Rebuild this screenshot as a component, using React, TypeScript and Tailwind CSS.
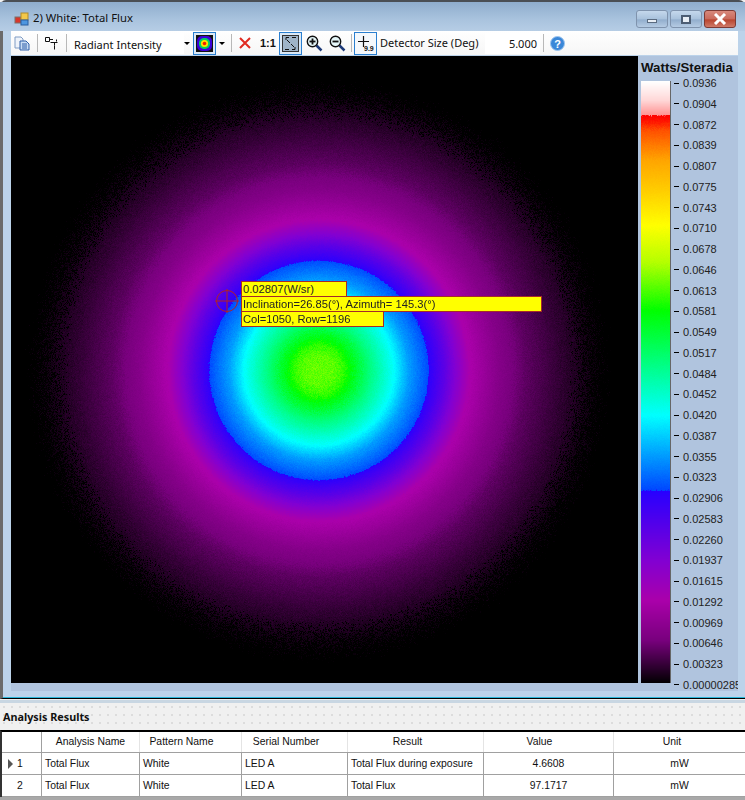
import { useEffect, useRef } from 'react'

const LEVELS = [
  '0.0936', '0.0904', '0.0872', '0.0839', '0.0807', '0.0775', '0.0743', '0.0710', '0.0678', '0.0646',
  '0.0613', '0.0581', '0.0549', '0.0517', '0.0484', '0.0452', '0.0420', '0.0387', '0.0355', '0.0323',
  '0.02906', '0.02583', '0.02260', '0.01937', '0.01615', '0.01292', '0.00969', '0.00646', '0.00323', '0.00000285',
]

// colour of the scale, keyed by the y of the scale on the page
const SCALE: number[][] = [
  [81, 255, 255, 255], [100, 255, 215, 215], [114, 255, 150, 150], [115, 255, 0, 0], [121, 255, 20, 0],
  [130, 255, 80, 0], [160, 255, 165, 0], [190, 255, 205, 0], [225, 255, 255, 0], [262, 180, 255, 0],
  [310, 0, 255, 0], [415, 0, 255, 255], [490, 0, 70, 255], [491, 40, 0, 255], [560, 130, 0, 210],
  [600, 170, 0, 170], [640, 120, 0, 125], [683, 0, 0, 0],
]

// radius in the plot -> y on the scale
const PROFILE: number[][] = [
  [0, 283], [15, 286], [25, 298], [32, 315], [40, 335], [52, 365], [75, 415], [90, 455], [109, 487], [111, 497],
  [125, 530], [150, 598], [180, 630], [207, 650], [240, 665], [270, 677], [295, 684], [900, 700],
]

function lerpTable(table: number[][], x: number, col: number) {
  if (x <= table[0][0]) return table[0][col]
  for (let i = 1; i < table.length; i++) {
    if (x <= table[i][0]) {
      const a = table[i - 1]
      const b = table[i]
      return a[col] + ((b[col] - a[col]) * (x - a[0])) / (b[0] - a[0])
    }
  }
  return table[table.length - 1][col]
}

function makeRandom(seed: number) {
  let s = seed
  return () => {
    s = (s * 1664525 + 1013904223) >>> 0
    return s / 4294967296
  }
}

function HeatMap() {
  const ref = useRef<HTMLCanvasElement>(null)
  useEffect(() => {
    const ctx = ref.current?.getContext('2d')
    if (!ctx) return
    const rnd = makeRandom(7)
    const img = ctx.createImageData(627, 627)
    for (let y = 0; y < 627; y++) {
      for (let x = 0; x < 627; x++) {
        const r = Math.hypot(x - 307.5, y - 314)
        const g = rnd() + rnd() + rnd() - 1.5
        const sigma = r < 45 ? 9 : r < 111 ? 4 : r < 240 ? 3 : 4
        const sy = lerpTable(PROFILE, r, 1) + g * sigma
        const black = r > 250 && rnd() < (r - 250) / 45
        const i = (y * 627 + x) * 4
        img.data[i] = black ? 0 : lerpTable(SCALE, sy, 1)
        img.data[i + 1] = black ? 0 : lerpTable(SCALE, sy, 2)
        img.data[i + 2] = black ? 0 : lerpTable(SCALE, sy, 3)
        img.data[i + 3] = 255
      }
    }
    ctx.putImageData(img, 0, 0)
  }, [])
  return <canvas ref={ref} width={627} height={627} className="block" />
}

function ScaleBar() {
  const ref = useRef<HTMLCanvasElement>(null)
  useEffect(() => {
    const ctx = ref.current?.getContext('2d')
    if (!ctx) return
    const rnd = makeRandom(3)
    const img = ctx.createImageData(29, 602)
    for (let y = 0; y < 602; y++) {
      for (let x = 0; x < 29; x++) {
        const sy = 81 + y + (y < 34 || y > 409 ? 0 : (rnd() - 0.5) * 3)
        const i = (y * 29 + x) * 4
        img.data[i] = lerpTable(SCALE, sy, 1)
        img.data[i + 1] = lerpTable(SCALE, sy, 2)
        img.data[i + 2] = lerpTable(SCALE, sy, 3)
        img.data[i + 3] = 255
      }
    }
    ctx.putImageData(img, 0, 0)
  }, [])
  return <canvas ref={ref} width={29} height={602} className="block border-r border-[#666] box-content" />
}

function Sep() {
  return <div className="w-px h-[18px] bg-[#b8b8b8]" />
}

function Arrow() {
  return <div className="w-0 h-0 border-x-[3px] border-x-transparent border-t-[3px] border-t-black" />
}

function Caption({ type }: { type: 'min' | 'max' | 'close' }) {
  const bg =
    type === 'close'
      ? 'bg-[linear-gradient(#d8897c,#c96a5c_50%,#b9452f_55%,#cf7a68)] border-[#7d3a34]'
      : 'bg-[linear-gradient(#c5d8ec,#a9c2dc_50%,#92aecd_55%,#b5cbe3)] border-[#7f93ad]'
  return (
    <div className={`w-[32px] h-[18px] rounded-[3px] border flex items-center justify-center ${bg}`}>
      {type === 'min' && <div className="w-[10px] h-[4px] mt-[4px] bg-[#e8eef5] border border-[#5a6b80]" />}
      {type === 'max' && <div className="w-[10px] h-[9px] bg-[#e8eef5] border-2 border-[#4c5d73]" />}
      {type === 'close' && (
        <svg width="14" height="12" viewBox="0 0 14 12">
          <path d="M2 1l10 10M12 1L2 11" stroke="#fff" strokeWidth="3" />
        </svg>
      )}
    </div>
  )
}

function Magnifier({ plus }: { plus: boolean }) {
  return (
    <svg width="17" height="17" viewBox="0 0 17 17" fill="none">
      <path d="M10.5 10.5L15.5 15.5" stroke="#1d3a78" strokeWidth="2.5" />
      <circle cx="6.5" cy="6.5" r="5.2" fill="#e6f7f9" stroke="#111" strokeWidth="1.4" />
      <path d="M3.5 6.5h6" stroke="#111" strokeWidth="1.8" />
      {plus && <path d="M6.5 3.5v6" stroke="#111" strokeWidth="1.8" />}
    </svg>
  )
}

function Toolbar() {
  return (
    <div className="ml-[11px] mr-[7px] h-[24px] flex items-center bg-[linear-gradient(#ffffff,#f6f6f6)] text-[11px] text-[#111] font-['Noto_Sans',sans-serif]">
      <svg width="16" height="15" viewBox="0 0 16 15" className="ml-[3px]">
        <path d="M1 1h6l2 2v9H1z" fill="#eef3fa" stroke="#7f9cc4" />
        <path d="M6 5h6l3 3v6H6z" fill="#c9dcf3" stroke="#2f5fa8" />
        <path d="M8 8h5M8 10h5M8 12h5" stroke="#2f5fa8" />
      </svg>
      <div className="ml-[7px]"><Sep /></div>
      <svg width="13" height="13" viewBox="0 0 13 13" fill="none" className="ml-[7px]">
        <path d="M.5.5h4v4h-4zM5 2.5h3M5.5 5.5h4v3M11.5 4.5v-2M8 5.5h4.5M9.5 8.5v4" stroke="#111" />
      </svg>
      <div className="ml-[8px]"><Sep /></div>
      <div className="ml-[3px] w-[114px] h-[21px] bg-white pl-[4px] leading-[23px]">Radiant Intensity</div>
      <Arrow />
      <div className="ml-[3px] w-[23px] h-[23px] border border-[#2a7fd0] bg-[#dbe9f7] flex items-center justify-center">
        <svg width="17" height="17" viewBox="0 0 17 17">
          <rect width="17" height="17" fill="#111" />
          <rect x="1" y="1" width="15" height="15" rx="5" fill="#3a00d8" />
          <rect x="3" y="3" width="11" height="11" rx="5" fill="#00d060" />
          <circle cx="8.5" cy="8.5" r="3.6" fill="#ffe000" />
          <circle cx="8.5" cy="8.5" r="1.8" fill="#f02000" />
        </svg>
      </div>
      <div className="ml-[3px]"><Arrow /></div>
      <div className="ml-[6px]"><Sep /></div>
      <svg width="12" height="12" viewBox="0 0 12 12" className="ml-[7px]">
        <path d="M1 1l10 10M11 1L1 11" stroke="#e02a20" strokeWidth="2" />
      </svg>
      <span className="ml-[9px] w-[17px] font-bold text-[11px] font-['Liberation_Sans',sans-serif]">1:1</span>
      <div className="ml-[2px] w-[23px] h-[23px] border border-[#2a7fd0] bg-[#dbe9f7] flex items-center justify-center">
        <svg width="17" height="17" viewBox="0 0 17 17" fill="none">
          <rect x=".5" y=".5" width="16" height="16" fill="#9fb4c8" stroke="#333" />
          <path d="M4 5V2.5h3M13 12v2.5h-3M10 2.5l4 0M3 14.5h4M5 5l3 3M12 12L9 9" stroke="#111" />
        </svg>
      </div>
      <div className="ml-[4px]"><Magnifier plus /></div>
      <div className="ml-[6px]"><Magnifier plus={false} /></div>
      <div className="ml-[5px]"><Sep /></div>
      <div className="ml-[2px] w-[23px] h-[23px] border border-[#2a7fd0] relative bg-[#f4f8fc]">
        <svg width="11" height="11" viewBox="0 0 11 11" className="absolute left-[3px] top-[3px]">
          <path d="M5.5 0v11M0 5.5h11" stroke="#111" strokeWidth="1.2" />
        </svg>
        <span className="absolute left-[9px] top-[11px] text-[7px] leading-[9px] font-bold font-['Liberation_Sans',sans-serif]">9.9</span>
      </div>
      <span className="ml-[3px] w-[105px] whitespace-nowrap">Detector Size (Deg)</span>
      <div className="w-[55px] h-[21px] bg-white pr-[3px] text-right leading-[21px]">5.000</div>
      <div className="ml-[3px]"><Sep /></div>
      <svg width="15" height="15" viewBox="0 0 15 15" className="ml-[6px]">
        <circle cx="7.5" cy="7.5" r="7" fill="#3a87d8" stroke="#9cc4ee" />
        <text x="7.5" y="11.5" textAnchor="middle" fontSize="11" fontWeight="700" fill="#fff" fontFamily="Liberation Sans">?</text>
      </svg>
    </div>
  )
}

const COLUMNS = [
  { label: '', cls: 'border-[#a0a0a0]' },
  { label: 'Analysis Name', cls: 'border-[#e4e4e4]' },
  { label: 'Pattern Name', cls: 'border-[#e4e4e4] pr-[18px]' },
  { label: 'Serial Number', cls: 'border-[#e4e4e4] pr-[17px]' },
  { label: 'Result', cls: 'border-[#e4e4e4] pr-[16px]' },
  { label: 'Value', cls: 'border-[#e4e4e4] pr-[18px]' },
  { label: 'Unit', cls: 'border-transparent pr-[14px]' },
]

const ROWS = [
  ['1', 'Total Flux', 'White', 'LED A', 'Total Flux during exposure', '4.6608', 'mW'],
  ['2', 'Total Flux', 'White', 'LED A', 'Total Flux', '97.1717', 'mW'],
]

const GRID = 'grid grid-cols-[40px_98px_102px_106px_136px_130px_131px]'

function ResultsTable() {
  return (
    <div className="border-t-2 border-black border-l-2 border-l-[#333] bg-white text-[10.4px] text-[#111] font-['Liberation_Sans',sans-serif]">
      <div className={`${GRID} h-[21px] border-b border-[#a0a0a0]`}>
        {COLUMNS.map((c, i) => (
          <div key={i} className={`flex items-center justify-center border-r ${c.cls}`}>
            {c.label}
          </div>
        ))}
      </div>
      {ROWS.map((row) => (
        <div key={row[0]} className={`${GRID} h-[22px] border-b border-[#a0a0a0]`}>
          <div className="relative flex items-center pl-[15px] border-r border-[#a0a0a0]">
            {row[0] === '1' && (
              <div className="absolute left-[6px] w-0 h-0 border-y-[5px] border-y-transparent border-l-[5px] border-l-[#555]" />
            )}
            {row[0]}
          </div>
          <div className="flex items-center pl-[3px] border-r border-[#a0a0a0]">{row[1]}</div>
          <div className="flex items-center pl-[3px] border-r border-[#a0a0a0]">{row[2]}</div>
          <div className="flex items-center pl-[3px] border-r border-[#a0a0a0]">{row[3]}</div>
          <div className="flex items-center pl-[3px] border-r border-[#a0a0a0] whitespace-nowrap">{row[4]}</div>
          <div className="flex items-center justify-center border-r border-[#a0a0a0]">{row[5]}</div>
          <div className="flex items-center justify-center">{row[6]}</div>
        </div>
      ))}
    </div>
  )
}

export default function App() {
  return (
    <div className="w-[745px] h-[800px] overflow-hidden flex flex-col bg-[#f0f0f0] font-['Liberation_Sans',sans-serif]">
      <div className="h-[699px] shrink-0 flex flex-col rounded-t-[6px] border-t-2 border-t-[#4a4f55] border-l-[3px] border-l-[#6b6b6b] border-b border-b-black bg-[#bcd3ea]">
        <div className="h-[29px] flex items-center -ml-[3px] pl-[3px] bg-[linear-gradient(#8fadcd,#a9c3de_60%,#b6cde5)]">
          <svg width="16" height="16" viewBox="0 0 16 16" className="ml-[11px] mt-[4px]">
            <rect x="1" y="6" width="6" height="6" fill="#d8362a" stroke="#7b6f6a" />
            <rect x="7" y="2" width="7" height="7" fill="#f3c84a" stroke="#b28b2a" />
            <rect x="7" y="9" width="7" height="5" fill="#4d96e0" stroke="#2a5ea0" />
          </svg>
          <span className="ml-[3px] mt-[4px] text-[11.3px] text-[#111] font-['Noto_Sans',sans-serif]">2) White: Total Flux</span>
          <div className="ml-auto mr-[9px] mt-[5px] flex gap-[2px]">
            <Caption type="min" />
            <Caption type="max" />
            <Caption type="close" />
          </div>
        </div>
        <div className="-ml-[3px]"><Toolbar /></div>
        <div className="mt-px ml-[8px] mr-[7px] h-[635px] flex bg-[#b0c4de]">
          <div className="relative w-[627px] h-[627px] shrink-0">
            <HeatMap />
            <svg width="24" height="24" viewBox="0 0 24 24" fill="none" className="absolute left-[204px] top-[233px]">
              <circle cx="12" cy="12" r="10.5" stroke="#b22222" />
              <path d="M12 0v24M0 12h24" stroke="#b22222" />
            </svg>
            <div className="absolute left-[230px] top-[225px] w-[106px] h-[16px] bg-[#ffff00] border border-[#a52a2a] pl-[1px] text-[11.2px] leading-[14px] text-[#222]">0.02807(W/sr)</div>
            <div className="absolute left-[230px] top-[240px] w-[301px] h-[16px] bg-[#ffff00] border border-[#a52a2a] pl-[1px] text-[11.2px] leading-[14px] text-[#222]">Inclination=26.85(°), Azimuth= 145.3(°)</div>
            <div className="absolute left-[230px] top-[255px] w-[143px] h-[16px] bg-[#ffff00] border border-[#a52a2a] pl-[1px] text-[11.2px] leading-[14px] text-[#222]">Col=1050, Row=1196</div>
          </div>
          <div className="w-[100px] shrink-0 overflow-hidden flex flex-col">
            <div className="h-[21px] pl-[3px] pt-[4px] text-[13.3px] leading-[15px] font-bold text-[#111] whitespace-nowrap">Watts/Steradia</div>
            <div className="flex flex-1 min-h-0">
              <div className="pl-[3px] pt-[4px]"><ScaleBar /></div>
              <div className="ml-[3px] flex-1 flex flex-col justify-between">
                {LEVELS.map((l) => (
                  <div key={l} className="h-[12px] flex items-center text-[11px] leading-[12px] text-[#222] whitespace-nowrap">
                    <div className="w-[5px] h-px bg-black mr-[4px] shrink-0" />
                    {l}
                  </div>
                ))}
              </div>
            </div>
          </div>
        </div>
        <div className="mt-auto h-px bg-[#29b6d8]" />
      </div>
      <div className="h-[3px] mt-px shrink-0 bg-[#c8d6e2]" />
      <div className="flex-1 flex flex-col bg-[#a8a8a8]">
        <div className="h-[27px] flex items-center pl-[3px] pt-[1px] text-[10.8px] font-bold text-[#111] font-['Noto_Sans',sans-serif] bg-[#f0f0f0] bg-[radial-gradient(#dcdcdc_1px,transparent_1px)] bg-[length:8px_8px]">
          Analysis Results
        </div>
        <ResultsTable />
      </div>
    </div>
  )
}
